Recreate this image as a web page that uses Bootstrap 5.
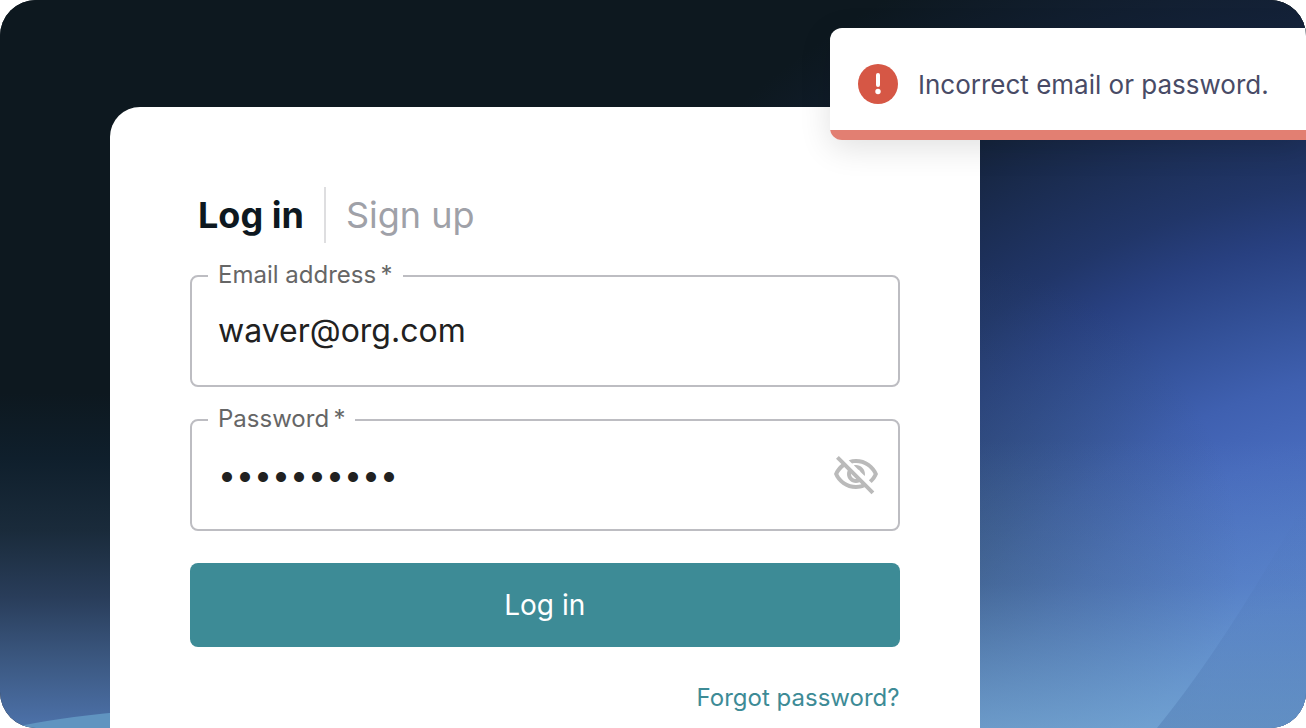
<!DOCTYPE html>
<html lang="en">
<head>
<meta charset="utf-8">
<meta name="viewport" content="width=device-width, initial-scale=1">
<title>Log in</title>
<link href="https://cdn.jsdelivr.net/npm/bootstrap@5.3.0/dist/css/bootstrap.min.css" rel="stylesheet">
<style>
  body { font-family: Inter, "Liberation Sans", sans-serif; background: #fff; }
  .page-shell { border-radius: 36px; background: #0d181f; }
  .backdrop { z-index: 0; }
  .login-panel { z-index: 1; margin: 107px 25% 0 110px; padding: 80px 80px 10px; border-radius: 30px 30px 0 0; background: #fff; }
  .login-panel form { gap: 32px; }
  .mode-tabs { height: 56px; padding-left: 8px; font-size: 36px; line-height: 56px; }
  .mode-tabs a { color: #9fa1a8; text-decoration: none; }
  .mode-tabs a.active { color: #0d1820; font-weight: 700; padding-right: 20px; margin-right: 20px; border-right: 2px solid #dedee0; }
  .outlined-field label { top: -18px; left: 18px; padding: 0 10px; background: #fff; color: #666; font-size: 24px; line-height: 36px; z-index: 2; }
  .outlined-field .form-control { height: 112px; padding: 0 26px 2px; border: 2px solid #bdbdc2; border-radius: 8px; background: #fff; color: #212121; font-size: 32px; }
  .toggle-eye { top: 32px; right: 20px; width: 48px; height: 48px; color: #bababa; }
  .submit-btn { height: 84px; border: 0; border-radius: 8px; background: #3d8b96; color: #fff; font-size: 28px; }
  .submit-btn:hover { background: #347a84; color: #fff; }
  .forgot-link { color: #3d8b96; font-size: 24px; line-height: 38px; text-decoration: none; }
  .error-toast { z-index: 3; top: 28px; right: 0; width: 476px; border-radius: 12px 0 0 12px; background: #fff; box-shadow: 0 8px 32px rgba(0,0,0,.12); color: #484b66; font-size: 26px; }
  .error-toast .message { height: 102px; padding: 10px 28px 0; gap: 20px; }
  .error-toast .timer-track { height: 12px; margin-top: -2px; overflow: hidden; border-radius: 0 0 0 12px; }
  .error-toast .timer-bar { height: 10px; margin-top: 2px; background: #e27f72; }
</style>
</head>
<body>
<div class="page-shell position-relative overflow-hidden min-vh-100 d-flex flex-column">
  <svg class="backdrop position-absolute top-0 start-0 w-100 h-100" viewBox="0 0 1306 728" preserveAspectRatio="xMidYMid slice" aria-hidden="true">
    <defs>
      <linearGradient id="dusk" x1="0" y1="0" x2="0" y2="1">
        <stop offset="0.54" stop-color="#0d181f"/>
        <stop offset="0.63" stop-color="#0f1f2c"/>
        <stop offset="0.73" stop-color="#1a2b3b"/>
        <stop offset="0.82" stop-color="#293d5a"/>
        <stop offset="0.9" stop-color="#3a567e"/>
        <stop offset="1" stop-color="#4d72aa"/>
      </linearGradient>
      <radialGradient id="glow" gradientUnits="userSpaceOnUse" cx="1420" cy="900" r="1080">
        <stop offset="0.3" stop-color="#5179c8"/>
        <stop offset="0.43" stop-color="#476abc"/>
        <stop offset="0.49" stop-color="#3f60b0"/>
        <stop offset="0.55" stop-color="#34529a"/>
        <stop offset="0.62" stop-color="#284080"/>
        <stop offset="0.67" stop-color="#213669"/>
        <stop offset="0.74" stop-color="#1b2d53"/>
        <stop offset="0.82" stop-color="#142239"/>
        <stop offset="0.97" stop-color="#0d181f"/>
        <stop offset="1" stop-color="#0d181f" stop-opacity="0"/>
      </radialGradient>
      <linearGradient id="horizon" x1="0" y1="0" x2="0" y2="1">
        <stop offset="0" stop-color="#78aed2" stop-opacity="0"/>
        <stop offset="0.5" stop-color="#78aed2" stop-opacity=".2"/>
        <stop offset="1" stop-color="#7cb0d6" stop-opacity=".72"/>
      </linearGradient>
      <radialGradient id="haze" gradientUnits="userSpaceOnUse" cx="940" cy="560" r="300">
        <stop offset="0" stop-color="#34506a" stop-opacity=".6"/>
        <stop offset="1" stop-color="#34506a" stop-opacity="0"/>
      </radialGradient>
      <linearGradient id="slope" x1="0" y1="0" x2="0" y2="1">
        <stop offset="0" stop-color="#4b70b4" stop-opacity="0"/>
        <stop offset="1" stop-color="#4b74ac" stop-opacity=".4"/>
      </linearGradient>
    </defs>
    <rect width="1306" height="728" fill="url(#dusk)"/>
    <rect width="1306" height="728" fill="url(#glow)"/>
    <rect x="545" y="260" width="761" height="468" fill="url(#haze)"/>
    <rect x="545" y="440" width="761" height="288" fill="url(#horizon)"/>
    <path d="M1157 728Q1225 645 1306 500V728Z" fill="url(#slope)"/>
    <path d="M10 728Q55 718 120 712V728Z" fill="#6094c0"/>
  </svg>

  <div class="error-toast position-absolute" role="alert">
    <div class="message d-flex align-items-center">
      <svg width="40" height="40" viewBox="0 0 40 40" class="flex-shrink-0" aria-hidden="true">
        <circle cx="20" cy="20" r="20" fill="#d65745"/>
        <path d="M20 11V21" stroke="#fff" stroke-width="4" stroke-linecap="round"/>
        <circle cx="20" cy="27.500" r="2.700" fill="#fff"/>
      </svg>
      <span class="text-nowrap">Incorrect email or password.</span>
    </div>
    <div class="timer-track d-flex flex-column"><div class="timer-bar"></div></div>
  </div>

  <main class="login-panel position-relative flex-grow-1">
    <form class="d-flex flex-column">
      <nav class="mode-tabs d-flex">
        <a href="#login" class="active" aria-current="page">Log in</a>
        <a href="#signup">Sign up</a>
      </nav>
      <div class="outlined-field position-relative">
        <label for="email" class="position-absolute">Email address&thinsp;*</label>
        <input id="email" type="email" class="form-control" value="waver@org.com">
      </div>
      <div class="outlined-field position-relative">
        <label for="password" class="position-absolute">Password&thinsp;*</label>
        <input id="password" type="password" class="form-control" value="waverwaver">
        <button type="button" class="toggle-eye btn border-0 p-0 position-absolute d-flex" aria-label="Show password">
          <svg width="48" height="48" viewBox="0 0 24 24" fill="currentColor" aria-hidden="true"><path d="M12 6c3.790 0 7.170 2.130 8.820 5.500-.59 1.220-1.420 2.270-2.410 3.120l1.410 1.410c1.390-1.230 2.490-2.770 3.180-4.530C21.270 7.110 17 4 12 4c-1.270 0-2.490.2-3.640.57l1.650 1.650C10.660 6.090 11.320 6 12 6zm-1.070 1.140L13 9.210c.57.25 1.030.71 1.280 1.280l2.070 2.070c.08-.34.14-.7.14-1.070C16.500 9.010 14.480 7 12 7c-.37 0-.72.05-1.070.14zM2.010 3.870l2.680 2.680C3.060 7.830 1.770 9.530 1 11.500 2.730 15.890 7 19 12 19c1.520 0 2.980-.29 4.320-.82l3.420 3.420 1.410-1.410L3.420 2.450 2.010 3.870zm7.500 7.500l2.610 2.610c-.04.01-.08.02-.12.02-1.380 0-2.500-1.120-2.500-2.500 0-.05.01-.08.01-.13zm-3.400-3.400l1.750 1.750c-.23.55-.36 1.150-.36 1.780 0 2.480 2.020 4.500 4.500 4.500.63 0 1.230-.13 1.770-.36l.98.98c-.88.24-1.800.38-2.750.38-3.790 0-7.170-2.130-8.820-5.500.7-1.430 1.720-2.610 2.930-3.530z"/></svg>
        </button>
      </div>
      <button type="submit" class="submit-btn btn w-100">Log in</button>
      <a href="#forgot" class="forgot-link align-self-end">Forgot password?</a>
    </form>
  </main>
</div>
<script src="https://cdn.jsdelivr.net/npm/bootstrap@5.3.0/dist/js/bootstrap.bundle.min.js"></script>
</body>
</html>
